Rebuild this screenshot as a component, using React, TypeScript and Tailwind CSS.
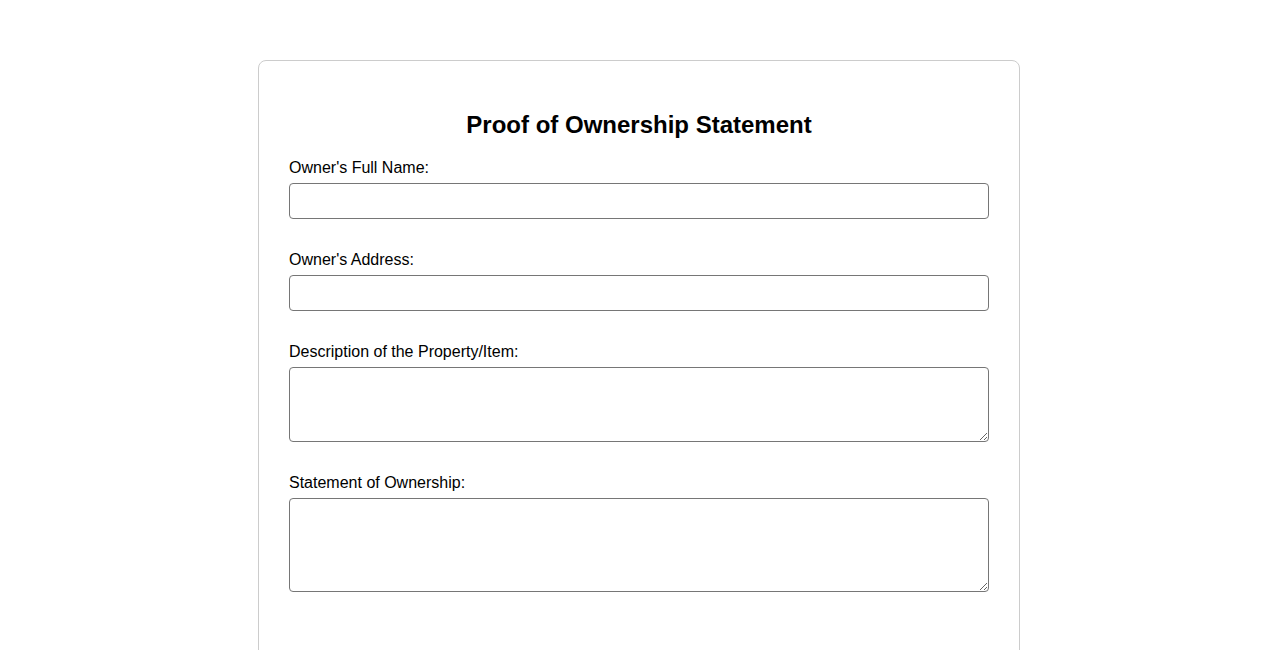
export default function App() {
  return (
    <div className="min-h-screen bg-white pt-[60px] font-['Liberation_Sans',Arial,sans-serif] text-black">
      <div className="mx-auto w-[762px] rounded-[8px] border border-[#cccccc] px-[30px] pt-[30px] pb-[100px]">
        <h2 className="mt-[20px] mb-[20px] text-center text-[24px] font-bold leading-[28px]">
          Proof of Ownership Statement
        </h2>
        <form className="flex flex-col gap-[32px]">
          <div>
            <label className="mb-[6px] block text-[16px] leading-[18px]">Owner's Full Name:</label>
            <input type="text" className="block h-[36px] w-full rounded-[4px] border border-[#767676] px-2" />
          </div>
          <div>
            <label className="mb-[6px] block text-[16px] leading-[18px]">Owner's Address:</label>
            <input type="text" className="block h-[36px] w-full rounded-[4px] border border-[#767676] px-2" />
          </div>
          <div>
            <label className="mb-[6px] block text-[16px] leading-[18px]">Description of the Property/Item:</label>
            <textarea className="block h-[75px] w-full rounded-[4px] border border-[#767676] p-2" />
          </div>
          <div>
            <label className="mb-[6px] block text-[16px] leading-[18px]">Statement of Ownership:</label>
            <textarea className="block h-[94px] w-full rounded-[4px] border border-[#767676] p-2" />
          </div>
        </form>
      </div>
    </div>
  );
}
